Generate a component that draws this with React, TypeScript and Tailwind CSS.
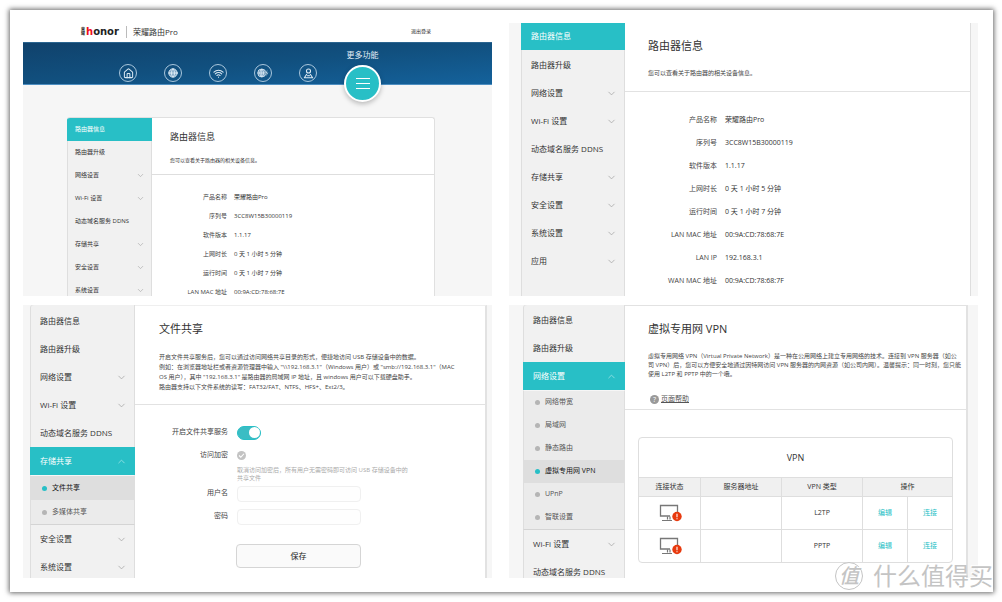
import React from "react";
import { ChevronDown, ChevronUp, Globe, House, Wifi } from "lucide-react";

type NavEntry = { label: string; expandable?: boolean; active?: boolean; children?: string[]; current?: string };

const baseEntries: NavEntry[] = [
  { label: "路由器信息" },
  { label: "路由器升级" },
  { label: "网络设置", expandable: true },
  { label: "Wi-Fi 设置", expandable: true },
  { label: "动态域名服务 DDNS" },
  { label: "存储共享", expandable: true },
  { label: "安全设置", expandable: true },
  { label: "系统设置", expandable: true },
  { label: "应用", expandable: true },
];

function entriesWith(count: number, active: string, children?: string[], current?: string): NavEntry[] {
  return baseEntries.slice(0, count).map((e) => (e.label === active ? { ...e, active: true, children, current } : e));
}

function SideNav({ entries, small = false, subHeight = "h-[23px]", className = "" }: {
  entries: NavEntry[]; small?: boolean; subHeight?: string; className?: string;
}) {
  const row = small ? "h-[23px] pl-2 pr-[7px] text-[6px]" : "h-7 pl-[10px] pr-[8px] text-[8px]";
  return (
    <nav className={`shrink-0 overflow-hidden bg-[#f1f1f1] shadow-[inset_1px_0_#dedede,inset_-1px_0_#dedede] ${className}`}>
      {entries.map((e) => {
        const Arrow = e.active ? ChevronUp : ChevronDown;
        const gap = e.active && !e.children && !small ? "mb-px" : "";
        return (
          <div key={e.label} className={gap}>
            <a
              href="#"
              className={`flex items-center justify-between whitespace-nowrap ${row} ${e.active ? "bg-[#28bfc6] text-white" : "text-[#333]"}`}
            >
              {e.label}
              {e.expandable && (
                <Arrow className={`${small ? "size-[9px]" : "size-[11px]"} ${e.active ? "text-[#9be3e6]" : "text-[#aaa]"}`} strokeWidth={1.8} />
              )}
            </a>
            {e.children && (
              <ul className="border border-b-[#d4d4d4] border-l-[#dedede] border-r-[#dedede] border-t-[#f6f6f6] bg-[#ebebeb]">
                {e.children.map((c) => (
                  <li key={c}>
                    <a
                      href="#"
                      className={`flex items-center gap-[5px] whitespace-nowrap pl-[11px] text-[7px] ${subHeight} ${c === e.current ? "bg-[#dedede] text-[#111]" : "text-[#555]"}`}
                    >
                      <span className={`size-[5px] rounded-full ${c === e.current ? "bg-[#28bfc6]" : "bg-[#b5b5b5]"}`} />
                      {c}
                    </a>
                  </li>
                ))}
              </ul>
            )}
          </div>
        );
      })}
    </nav>
  );
}

const details: [string, string][] = [
  ["产品名称", "荣耀路由Pro"],
  ["序列号", "3CC8W15B30000119"],
  ["软件版本", "1.1.17"],
  ["上网时长", "0 天 1 小时 5 分钟"],
  ["运行时间", "0 天 1 小时 7 分钟"],
  ["LAN MAC 地址", "00:9A:CD:78:68:7E"],
  ["LAN IP", "192.168.3.1"],
  ["WAN MAC 地址", "00:9A:CD:78:68:7F"],
];

function Details({ rows, small = false }: { rows: [string, string][]; small?: boolean }) {
  return (
    <dl className={small ? "pt-[13px] text-[6px]" : "pt-[17px] text-[7px]"}>
      {rows.map(([k, v]) => (
        <div key={k} className={`flex items-center whitespace-nowrap ${small ? "h-[19px] gap-[7px]" : "h-[23px] gap-2"}`}>
          <dt className={`text-right text-[#444] ${small ? "w-[75px]" : "w-[92px]"}`}>{k}</dt>
          <dd className="text-[#333]">{v}</dd>
        </div>
      ))}
    </dl>
  );
}

function RoundIcon({ label, children }: { label: string; children: React.ReactNode }) {
  return (
    <button aria-label={label} className="flex size-[18px] items-center justify-center rounded-full border border-[#a9c6dc] text-[#dbe9f3]">
      {children}
    </button>
  );
}

function HomePanel() {
  return (
    <section className="flex min-h-0 flex-col overflow-hidden bg-[#f6f6f6]">
      <header className="flex h-[19px] shrink-0 items-center bg-white pb-[2px] pl-[58px] pr-[61px]">
        <div className="flex items-center gap-px">
          <span className="w-1 text-[4px] font-bold leading-[4px] text-[#222]">荣耀</span>
          <span className="font-['DejaVu_Sans'] text-[10px] font-bold leading-[12px] text-[#222]">
            <span className="text-[#f0101a]">h</span>onor
          </span>
        </div>
        <span className="ml-[7px] h-3 w-px bg-[#bbb]" />
        <h1 className="ml-[6px] text-[8px] text-[#333]">荣耀路由Pro</h1>
        <a href="#" className="ml-auto text-[5px] text-[#222]">退出登录</a>
      </header>
      <div className="relative z-10 flex h-[43px] shrink-0 items-end gap-[27px] border-b border-t border-b-[#4d8ec1] border-t-[#2b6590] bg-linear-to-br from-[#10426c] via-[#11507f] to-[#14629c] pb-[2px] pl-24">
        <RoundIcon label="首页"><House className="size-[11px]" strokeWidth={2.2} /></RoundIcon>
        <RoundIcon label="上网">
          <Globe className="size-[10px]" fill="#7fa6c6" strokeWidth={2.4} />
        </RoundIcon>
        <RoundIcon label="Wi-Fi"><Wifi className="size-[11px]" strokeWidth={2.4} /></RoundIcon>
        <RoundIcon label="网络加速">
          <svg viewBox="0 0 24 20" className="h-[10px] w-3" fill="none" stroke="currentColor" strokeWidth="1.8">
            <circle cx="9.5" cy="10" r="8" fill="#5f8fb6" />
            <path d="M1.5 10h16M9.5 2v16M9.5 2c-5 5-5 11 0 16M9.5 2c5 5 5 11 0 16" />
            <path d="M21 3l-5 8h3l-1 6 5-8h-3z" fill="currentColor" stroke="#11507f" strokeWidth="0.8" />
          </svg>
        </RoundIcon>
        <RoundIcon label="终端管理">
          <svg viewBox="0 0 20 20" className="size-[11px]" fill="none" stroke="currentColor" strokeWidth="2">
            <circle cx="10" cy="5.5" r="3.7" />
            <path d="M7 11 2.5 17.8h15L13 11" strokeLinejoin="round" />
            <path d="M7.5 14h5" />
          </svg>
        </RoundIcon>
        <div className="flex h-10 w-[37px] flex-col items-center self-start pt-[6px]">
          <span className="whitespace-nowrap text-[8px] leading-[11px] text-[#e1edf5]">更多功能</span>
          <button aria-label="更多功能" className="mt-[5px] flex size-[37px] shrink-0 flex-col items-center justify-center gap-1 rounded-full border-2 border-white bg-[#28bfc6] shadow-[0_2px_5px_rgba(0,0,0,0.25)]">
            <span className="h-px w-[14px] bg-white" />
            <span className="h-px w-[14px] bg-white" />
            <span className="h-px w-[14px] bg-white" />
          </button>
        </div>
      </div>
      <div className="ml-11 mr-[57px] mt-8 flex min-h-0 grow overflow-hidden rounded-t-[3px] border-r border-t border-[#e0e0e0] bg-white">
        <SideNav small entries={entriesWith(8, "路由器信息")} className="w-[85px]" />
        <div className="min-w-0 grow">
          <div className="h-[57px] border-b border-[#dedede] pl-[18px] pt-3">
            <h2 className="text-[9px] leading-[14px] text-[#333]">路由器信息</h2>
            <p className="mt-3 text-[5px] leading-[8px] text-[#333]">您可以查看关于路由器的相关设备信息。</p>
          </div>
          <Details small rows={details.slice(0, 6)} />
        </div>
      </div>
    </section>
  );
}

function InfoPanel() {
  return (
    <section className="flex min-h-0 overflow-hidden bg-[#f6f6f6] pl-3 pr-[7px]">
      <SideNav entries={entriesWith(9, "路由器信息")} className="-mt-px w-[104px]" />
      <div className="min-w-0 grow border-r border-[#dedede] bg-white">
        <div className="h-[69px] border-b border-[#e2e2e2] pl-[23px] pt-[15px]">
          <h2 className="text-[11px] leading-[15px] text-[#333]">路由器信息</h2>
          <p className="mt-4 text-[6px] leading-[9px] text-[#444]">您可以查看关于路由器的相关设备信息。</p>
        </div>
        <Details rows={details} />
      </div>
    </section>
  );
}

function FieldRow({ id, label, children }: { id: string; label: string; children: React.ReactNode }) {
  return (
    <div className="flex h-[23px] items-center gap-[9px]">
      <label htmlFor={id} className="w-[93px] text-right text-[7px] text-[#444]">{label}</label>
      {children}
    </div>
  );
}

function SharePanel() {
  const box = "h-4 w-[124px] rounded-[4px] border border-[#f0f0f0] bg-[#fefefe] px-1 text-[7px]";
  return (
    <section className="flex min-h-0 overflow-hidden bg-[#f6f6f6] pl-[7px] pr-[5px]">
      <SideNav entries={entriesWith(8, "存储共享", ["文件共享", "多媒体共享"], "文件共享")} subHeight="h-6" className="w-[105px] rounded-tl-[3px] pt-[2px]" />
      <div className="min-w-0 grow border-r-2 border-t border-r-[#e2e2e2] border-t-[#efefef] bg-white">
        <div className="h-[99px] border-b border-[#e2e2e2] pl-6 pt-[15px]">
          <h2 className="text-[11px] leading-4 text-[#333]">文件共享</h2>
          <p className="mt-[15px] whitespace-nowrap text-[6px] leading-[10px] text-[#444]">
            开启文件共享服务后，您可以通过访问网络共享目录的形式，便捷地访问 USB 存储设备中的数据。<br />
            例如：在浏览器地址栏或者资源管理器中输入 "\\192.168.3.1"（Windows 用户）或 "smb://192.168.3.1"（MAC<br />
            OS 用户），其中 "192.168.3.1" 是路由器的局域网 IP 地址，且 windows 用户可以下载硬盘助手。<br />
            路由器支持以下文件系统的读写：FAT32/FAT、NTFS、HFS+、Ext2/3。
          </p>
        </div>
        <form className="pt-4">
          <FieldRow id="share-on" label="开启文件共享服务">
            <input
              id="share-on" type="checkbox" role="switch" defaultChecked
              className="flex h-[14px] w-6 appearance-none items-center justify-start rounded-full border border-[#28bfc6] bg-[#3abdc4] before:size-[11px] before:rounded-full before:bg-white checked:justify-end"
            />
          </FieldRow>
          <FieldRow id="share-lock" label="访问加密">
            <span className="grid size-[9px] place-items-center">
              <input id="share-lock" type="checkbox" defaultChecked className="col-start-1 row-start-1 size-[9px] appearance-none rounded-full bg-[#c3c3c3]" />
              <svg viewBox="0 0 10 10" className="pointer-events-none col-start-1 row-start-1 size-[7px]" fill="none" stroke="#fff" strokeWidth="1.6">
                <path d="M1.5 5 4 7.5 8.5 2.5" />
              </svg>
            </span>
          </FieldRow>
          <p className="-mt-px ml-[102px] whitespace-nowrap text-[6px] leading-[8px] text-[#aaa]">
            取消访问加密后，所有用户无需密码即可访问 USB 存储设备中的<br />共享文件
          </p>
          <FieldRow id="share-user" label="用户名"><input id="share-user" type="text" className={box} /></FieldRow>
          <FieldRow id="share-pass" label="密码"><input id="share-pass" type="password" className={box} /></FieldRow>
          <button type="button" className="ml-[101px] mt-4 block h-6 w-[125px] rounded-[4px] border border-[#d5d5d5] bg-[#fafafa] text-[8px] text-[#222]">保存</button>
        </form>
      </div>
    </section>
  );
}

function StatusIcon() {
  return (
    <svg viewBox="0 0 24 20" className="mx-auto h-5 w-6" role="img" aria-label="未连接" fill="none">
      <path d="M12 13H2.5V2.5h17V9" stroke="#777" strokeWidth="1.3" />
      <path d="M9.5 13.5v3M12 13.5v3M4 17.5h10" stroke="#777" strokeWidth="1.2" />
      <circle cx="19" cy="13.5" r="4.7" fill="#e83a0e" />
      <path d="M19 10.8v3.4M19 15.2v1" stroke="#fff" strokeWidth="1.1" />
    </svg>
  );
}

function VpnPanel() {
  const cell = "border-r border-t border-[#dedede]";
  return (
    <section className="flex min-h-0 overflow-hidden bg-[#f6f6f6] pl-[14px] pr-[10px]">
      <SideNav
        entries={entriesWith(5, "网络设置", ["网络带宽", "局域网", "静态路由", "虚拟专用网 VPN", "UPnP", "智联设置"], "虚拟专用网 VPN")}
        className="w-[102px] rounded-tl-[3px] pt-px"
      />
      <div className="min-w-0 grow border-r-2 border-t border-[#e2e2e2] bg-white">
        <div className="h-[104px] border-b border-[#e2e2e2] pl-[23px] pt-[15px]">
          <h2 className="text-[11px] leading-4 text-[#333]">虚拟专用网 VPN</h2>
          <p className="mt-[15px] whitespace-nowrap text-[6px] leading-[9px] text-[#444]">
            虚拟专用网络 VPN（Virtual Private Network）是一种在公用网络上建立专用网络的技术。连接到 VPN 服务器（如公<br />
            司 VPN）后，您可以方便安全地通过因特网访问 VPN 服务器的内网资源（如公司内网）。温馨提示：同一时刻，您只能<br />
            使用 L2TP 和 PPTP 中的一个哦。
          </p>
          <a href="#" className="mt-[15px] flex items-center gap-[2px] pl-[2px] text-[7px] leading-[10px] text-[#555]">
            <span className="flex size-[9px] items-center justify-center rounded-full bg-[#999] text-[7px] leading-[9px] text-white">?</span>
            <span className="underline">页面帮助</span>
          </a>
        </div>
        <div className="ml-[13px] mr-[13px] mt-[27px] overflow-hidden rounded-[4px] border border-[#dedede]">
          <table className="w-full table-fixed border-separate border-spacing-0 text-center text-[7px] text-[#333]">
            <caption className="h-[39px] text-[9px] leading-[39px]">VPN</caption>
            <colgroup>
              <col className="w-[62px]" /><col className="w-[81px]" /><col className="w-[81px]" /><col className="w-[45px]" /><col />
            </colgroup>
            <thead className="bg-[#f0f0f0]">
              <tr className="h-[19px]">
                <th scope="col" className={`${cell} font-normal`}>连接状态</th>
                <th scope="col" className={`${cell} font-normal`}>服务器地址</th>
                <th scope="col" className={`${cell} font-normal`}>VPN 类型</th>
                <th scope="col" colSpan={2} className="border-t border-[#dedede] font-normal">操作</th>
              </tr>
            </thead>
            <tbody>
              {["L2TP", "PPTP"].map((t) => (
                <tr key={t} className="h-[33px]">
                  <td className={cell}><StatusIcon /></td>
                  <td className={cell} />
                  <td className={cell}>{t}</td>
                  <td className={cell}><a href="#" className="text-[#28bfc6]">编辑</a></td>
                  <td className="border-t border-[#dedede]"><a href="#" className="text-[#28bfc6]">连接</a></td>
                </tr>
              ))}
            </tbody>
          </table>
        </div>
      </div>
    </section>
  );
}

export default function App() {
  return (
    <div className="h-screen bg-white pb-[10px] pl-[10px] pr-[9px] pt-[10px] font-['Open_Sans','Noto_Sans_CJK_SC',sans-serif]">
      <main className="relative grid h-full grid-cols-2 grid-rows-2 gap-x-[17px] gap-y-[9px] bg-white pb-[14px] pl-[13px] pr-[15px] pt-[13px] shadow-[0_0_5px_1px_rgba(0,0,0,0.6)]">
        <HomePanel />
        <InfoPanel />
        <SharePanel />
        <VpnPanel />
        <div className="pointer-events-none absolute bottom-px right-0 flex items-center gap-[10px] whitespace-nowrap text-[#c4c4c4] [text-shadow:-1px_-1px_0_#fff]">
          <span className="flex size-7 items-center justify-center rounded-full border border-[#c4c4c4] bg-white text-[20px] font-medium italic leading-[26px]">值</span>
          <span className="text-[24px] leading-[30px]">什么值得买</span>
        </div>
      </main>
    </div>
  );
}
